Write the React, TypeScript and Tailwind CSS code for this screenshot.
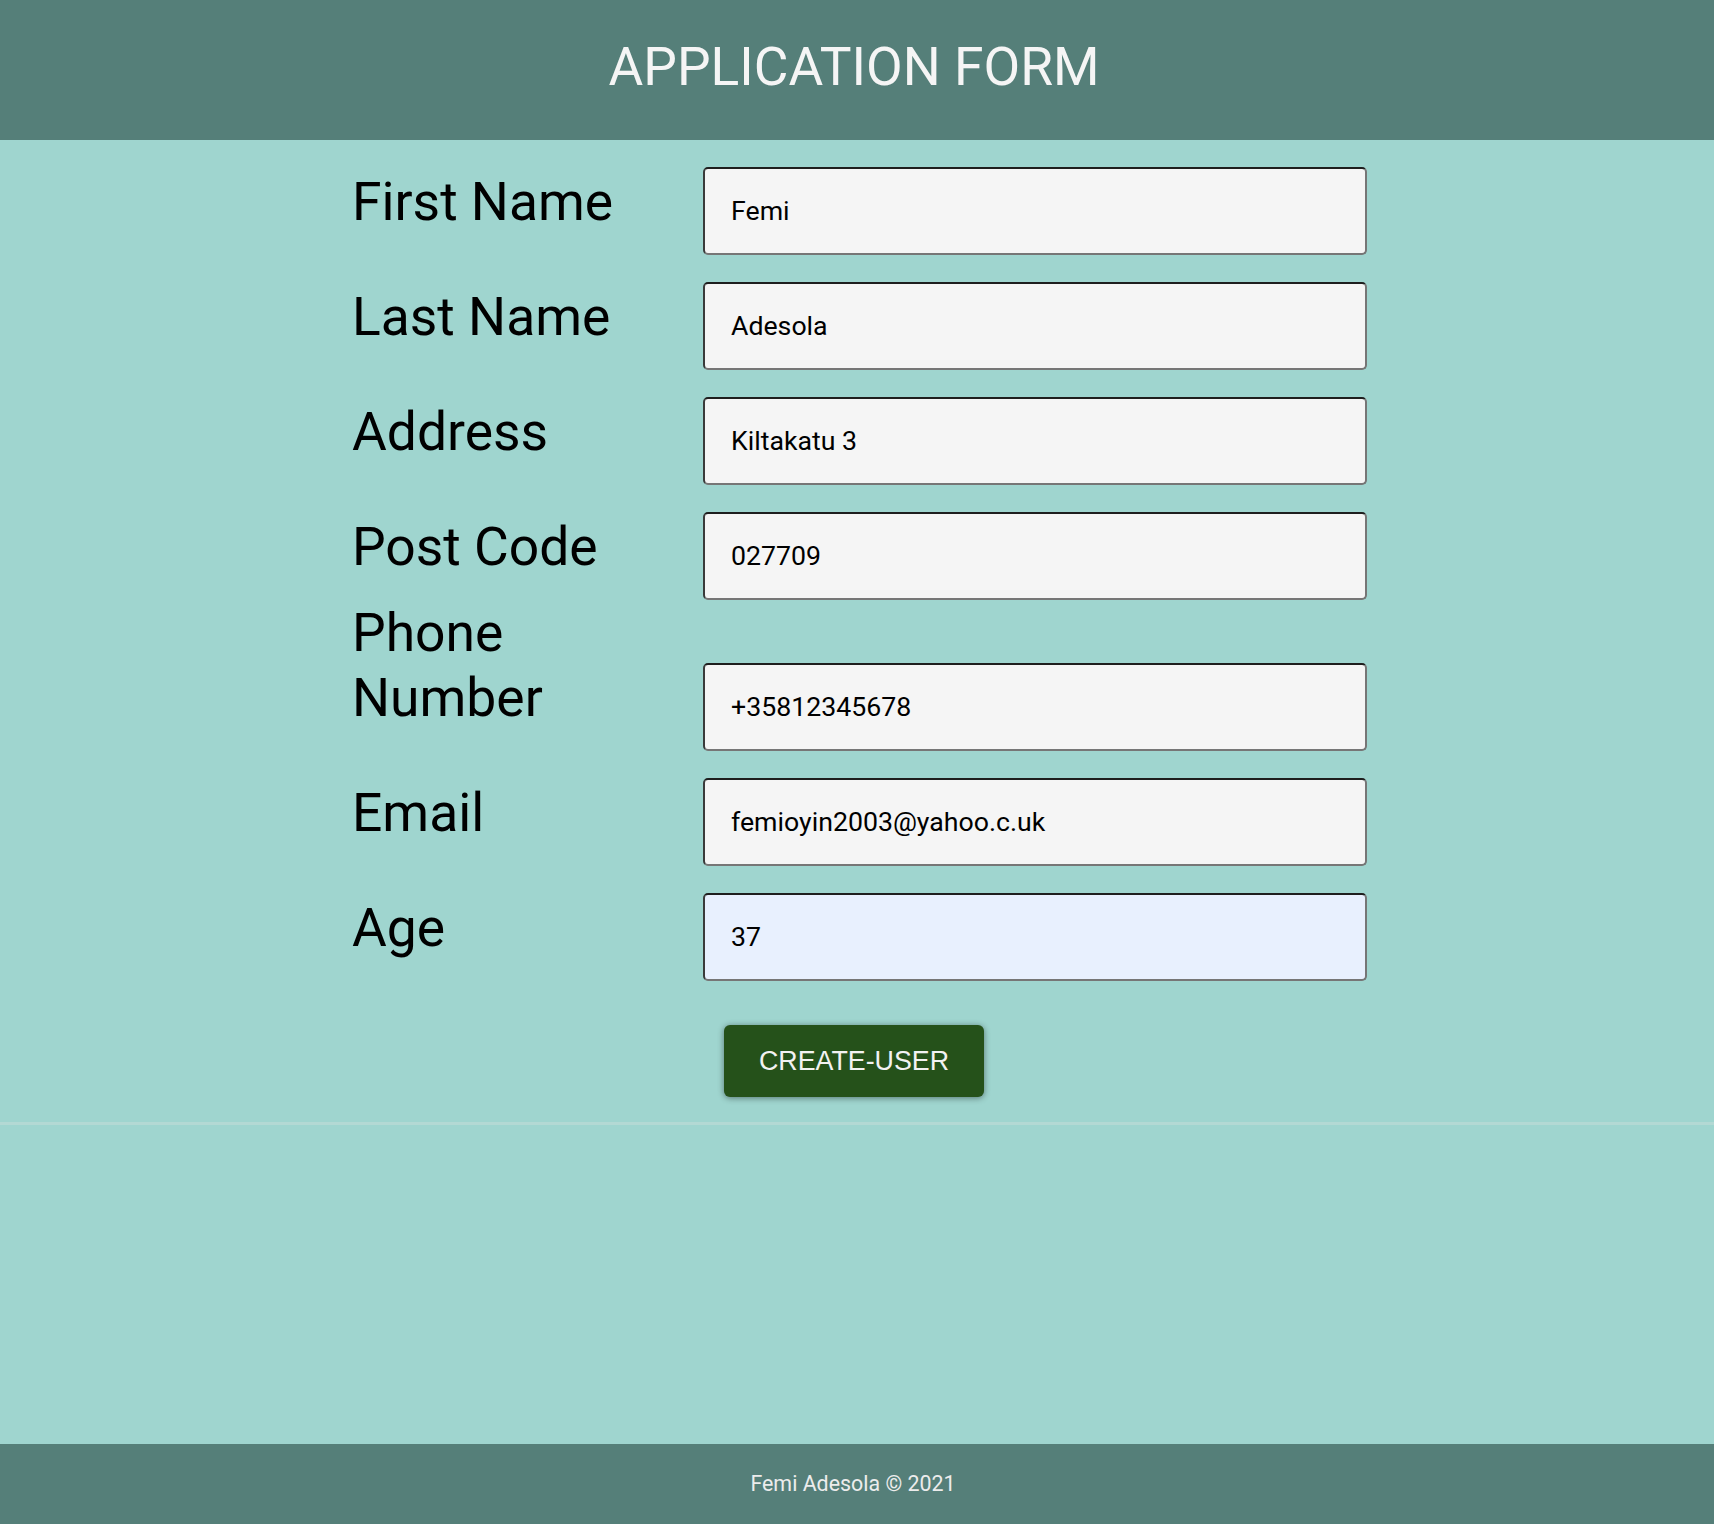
import React from "react";

const fields: { label: string; value: string; autofill?: boolean }[] = [
  { label: "First Name", value: "Femi" },
  { label: "Last Name", value: "Adesola" },
  { label: "Address", value: "Kiltakatu 3" },
  { label: "Post Code", value: "027709" },
  { label: "Phone Number", value: "+35812345678" },
  { label: "Email", value: "femioyin2003@yahoo.c.uk" },
  { label: "Age", value: "37", autofill: true },
];

export default function App() {
  return (
    <div className="min-h-screen flex flex-col bg-[#9fd5cf] font-['Roboto',sans-serif]">
      <header className="h-[140px] shrink-0 bg-[#557f79] pt-[36px] pr-[6px] text-center">
        <h1 className="text-[53.3px] leading-[62.5px] font-normal text-[#f5f5f5]">APPLICATION FORM</h1>
      </header>

      <main className="flex flex-col">
        <form className="w-[1010px] mx-auto flex flex-col" onSubmit={(e) => e.preventDefault()}>
          {fields.map((f) => (
            <div key={f.label} className="flex items-baseline-last">
              <label className="w-[328px] mr-[23px] shrink-0 text-[53.4px] leading-[65px] text-black">
                {f.label}
              </label>
              <input
                readOnly
                value={f.value}
                className={
                  "mt-[27px] h-[88px] w-[664px] shrink-0 rounded-[5px] border-2 border-t-[#1e1e1e] border-l-[#3a3a3a] border-r-[#767676] border-b-[#767676] pl-[26px] text-[26.7px] text-black font-['Roboto',sans-serif] outline-none " +
                  (f.autofill ? "bg-[#e8f0fe]" : "bg-[#f5f5f5]")
                }
              />
            </div>
          ))}
          <div className="mt-[44px] flex justify-center pr-[6px]">
            <button
              type="submit"
              className="w-[260px] h-[72px] rounded-[6px] bg-[#25511a] text-[#f2f2f2] text-[26.8px] font-['Liberation_Sans',Arial,sans-serif] shadow-[0_1px_6px_rgba(0,0,0,0.45)]"
            >
              CREATE-USER
            </button>
          </div>
        </form>
        <div className="mt-[25px] h-[3px] bg-[#b3d9d4]" />
      </main>

      <div className="flex-1" />

      <footer className="h-[80px] shrink-0 bg-[#557f79] flex items-center justify-center pr-[8px]">
        <p className="text-[21.4px] text-[#ececec]">Femi Adesola © 2021</p>
      </footer>
    </div>
  );
}
